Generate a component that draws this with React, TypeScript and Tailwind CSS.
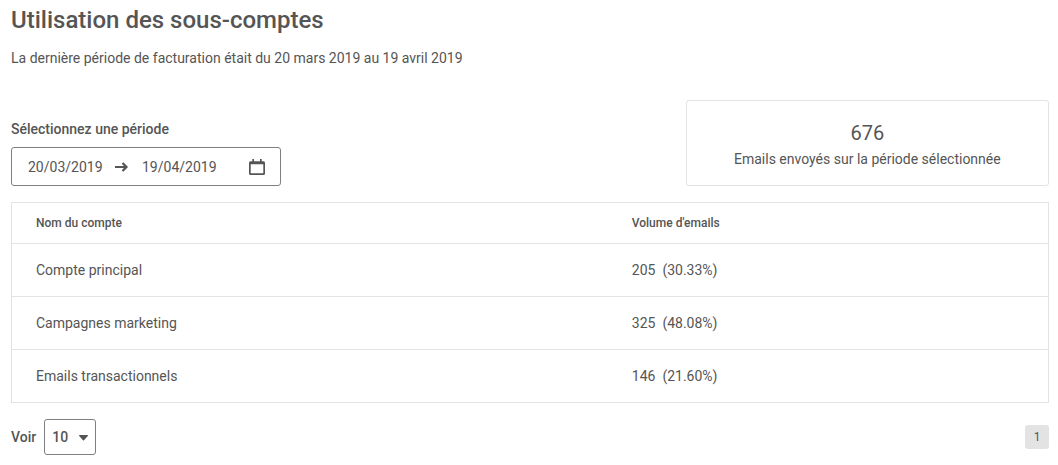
import { useState } from "react";

type Account = { name: string; volume: number; share: string };

const accounts: Account[] = [
  { name: "Compte principal", volume: 205, share: "30.33%" },
  { name: "Campagnes marketing", volume: 325, share: "48.08%" },
  { name: "Emails transactionnels", volume: 146, share: "21.60%" },
];

function ArrowIcon() {
  return (
    <svg width="14" height="12" viewBox="0 0 14 12" fill="none" stroke="currentColor" strokeWidth="2" aria-hidden="true">
      <path d="M0 6h11" />
      <path d="M7.500 2l4 4-4 4" strokeWidth="2.200" />
    </svg>
  );
}

function CalendarIcon() {
  return (
    <svg width="16" height="16" viewBox="0 0 16 16" fill="currentColor" aria-hidden="true">
      <path
        fillRule="evenodd"
        d="M3.300 0h1.700v2.300h6V0h1.700v2.300h1.800A1.500 1.500 0 0 1 16 3.800v10.700A1.500 1.500 0 0 1 14.500 16h-13A1.500 1.500 0 0 1 0 14.500V3.800A1.500 1.500 0 0 1 1.500 2.300h1.800zM1.700 5.300v9h12.600v-9z"
      />
    </svg>
  );
}

function DateRange() {
  const [start, setStart] = useState("20/03/2019");
  const [end, setEnd] = useState("19/04/2019");
  return (
    <fieldset>
      <legend className="mb-2 text-sm leading-5 font-medium">Sélectionnez une période</legend>
      <div className="flex h-[39px] w-[270px] items-center rounded-[3px] border border-[#808080] pr-[15px] pl-4">
        <input
          type="text"
          aria-label="Date de début"
          value={start}
          onChange={(e) => setStart(e.target.value)}
          className="w-[87px] bg-transparent text-sm outline-none"
        />
        <ArrowIcon />
        <input
          type="text"
          aria-label="Date de fin"
          value={end}
          onChange={(e) => setEnd(e.target.value)}
          className="ml-[13px] min-w-0 flex-1 bg-transparent text-sm outline-none"
        />
        <button type="button" aria-label="Ouvrir le calendrier">
          <CalendarIcon />
        </button>
      </div>
    </fieldset>
  );
}

export default function App() {
  const [pageSize, setPageSize] = useState("10");
  return (
    <main className="bg-white pt-1 pr-[9px] pb-2 pl-[11px] font-[Roboto,'Liberation_Sans',sans-serif] text-[#555555]">
      <h1 className="text-2xl leading-8 font-medium">Utilisation des sous-comptes</h1>
      <p className="mt-3 text-sm leading-5">
        La dernière période de facturation était du 20 mars 2019 au 19 avril 2019
      </p>

      <div className="mt-8 flex items-end justify-between gap-6">
        <DateRange />
        <section className="flex h-[86px] w-[35%] flex-col items-center justify-center rounded-[3px] border border-[#e3e3e3] pt-1 text-center">
          <p className="text-xl leading-7">676</p>
          <p className="text-sm leading-6">Emails envoyés sur la période sélectionnée</p>
        </section>
      </div>

      <table className="mt-4 w-full table-fixed border-collapse border border-[#e3e3e3] text-left">
        <thead>
          <tr className="h-[41px] border-b border-[#e3e3e3] text-xs">
            <th scope="col" className="w-[57.5%] px-6 font-medium">Nom du compte</th>
            <th scope="col" className="px-6 font-medium">Volume d'emails</th>
          </tr>
        </thead>
        <tbody className="text-sm">
          {accounts.map((account) => (
            <tr key={account.name} className="h-[53px] border-b border-[#e3e3e3]">
              <td className="px-6">{account.name}</td>
              <td className="px-6">
                <span className="mr-[7px]">{account.volume}</span>
                <span>({account.share})</span>
              </td>
            </tr>
          ))}
        </tbody>
      </table>

      <footer className="mt-4 flex items-center justify-between">
        <div className="flex items-center gap-2 text-sm font-medium">
          <label htmlFor="page-size">Voir</label>
          <div className="relative">
            <select
              id="page-size"
              value={pageSize}
              onChange={(e) => setPageSize(e.target.value)}
              className="block h-9 w-[52px] appearance-none rounded-[3px] border border-[#808080] bg-white pl-[7px] font-medium"
            >
              <option>10</option>
              <option>25</option>
              <option>50</option>
            </select>
            <svg
              className="pointer-events-none absolute top-4 right-2"
              width="9"
              height="6"
              viewBox="0 0 9 6"
              fill="currentColor"
              aria-hidden="true"
            >
              <path d="M.5 0h8q.7.300.3.900L5 5.300q-.5.500-1 0L.2.900Q-.2.300.5 0z" />
            </svg>
          </div>
        </div>
        <nav aria-label="Pagination">
          <button type="button" aria-current="page" className="block size-6 rounded-[3px] bg-[#e3e3e3] text-xs">
            1
          </button>
        </nav>
      </footer>
    </main>
  );
}
